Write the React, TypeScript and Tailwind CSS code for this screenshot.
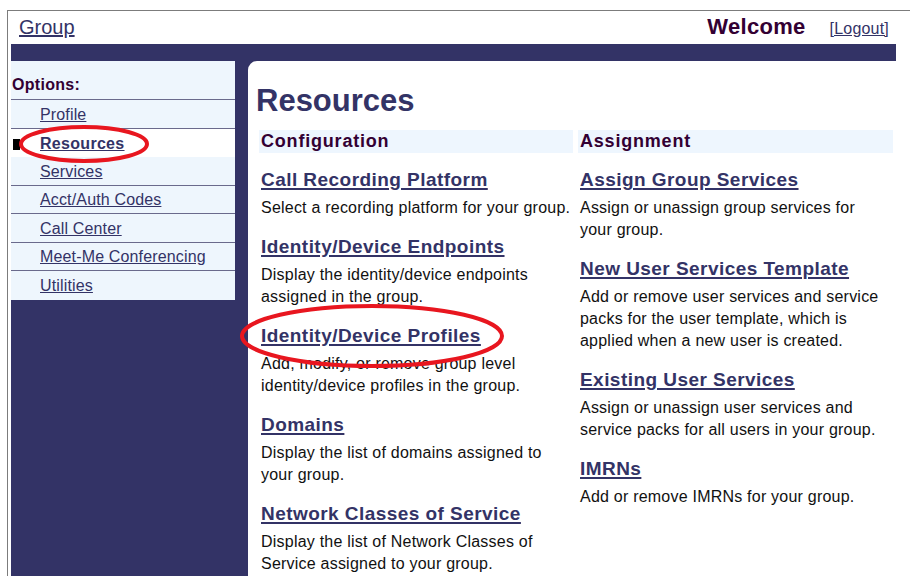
const menuItems = [
  "Profile",
  "Resources",
  "Services",
  "Acct/Auth Codes",
  "Call Center",
  "Meet-Me Conferencing",
  "Utilities",
];

const configuration = [
  {
    title: "Call Recording Platform",
    text: "Select a recording platform for your group.",
  },
  {
    title: "Identity/Device Endpoints",
    text: "Display the identity/device endpoints assigned in the group.",
  },
  {
    title: "Identity/Device Profiles",
    text: "Add, modify, or remove group level identity/device profiles in the group.",
  },
  {
    title: "Domains",
    text: "Display the list of domains assigned to your group.",
  },
  {
    title: "Network Classes of Service",
    text: "Display the list of Network Classes of Service assigned to your group.",
  },
];

const assignment = [
  {
    title: "Assign Group Services",
    text: "Assign or unassign group services for your group.",
  },
  {
    title: "New User Services Template",
    text: "Add or remove user services and service packs for the user template, which is applied when a new user is created.",
  },
  {
    title: "Existing User Services",
    text: "Assign or unassign user services and service packs for all users in your group.",
  },
  {
    title: "IMRNs",
    text: "Add or remove IMRNs for your group.",
  },
];

type Item = { title: string; text: string };

const Section = ({ heading, items, narrow }: { heading: string; items: Item[]; narrow?: boolean }) => {
  return (
    <div>
      <div className="h-[23px] bg-[#eef6fe] px-[2px] text-[18px] font-bold leading-[23px] tracking-[0.8px] text-[#330033]">
        {heading}
      </div>
      <div className={narrow ? "mt-[16px] flex flex-col gap-[17px] pl-[2px] pr-[6px]" : "mt-[16px] flex flex-col gap-[17px] pl-[2px]"}>
        {items.map((item) => (
          <div key={item.title}>
            <a
              href="#"
              className="text-[19px] font-bold leading-[22px] tracking-[0.45px] text-[#333366] underline decoration-2 underline-offset-[2px]"
            >
              {item.title}
            </a>
            <p className="mt-[4px] text-[16px] leading-[22px] tracking-[0.22px] text-[#111111]">{item.text}</p>
          </div>
        ))}
      </div>
    </div>
  );
};

const App = () => {
  return (
    <div className="relative h-[576px] w-[910px] overflow-hidden bg-white pl-[7px] pt-[10px] font-['Liberation_Sans',Arial,sans-serif]">
      <div className="flex h-full flex-col border-l border-t border-[#7c7c7c] pl-[3px]">
        {/* Top header */}
        <div className="flex h-[33px] shrink-0 items-baseline pr-[21px] pt-[4px]">
          <a href="#" className="ml-[8px] text-[20px] leading-[24px] text-[#333366] underline">
            Group
          </a>
          <span className="ml-auto text-[22px] font-bold leading-[24px] tracking-[0.3px] text-[#330033]">Welcome</span>
          <a href="#" className="ml-[24px] text-[16px] leading-[24px] tracking-[0.2px] text-[#333366] underline">
            [Logout]
          </a>
        </div>

        {/* Navy frame */}
        <div className="mr-[14px] flex min-h-0 flex-1 bg-[#333366] pt-[17px]">
          {/* Sidebar menu */}
          <div className="w-[224px] self-start bg-[#eef6fd]">
            <div className="flex h-[39px] items-end border-b border-[#6a6a8c] pb-[4px] pl-[1px] text-[16px] font-bold leading-[20px] tracking-[0.3px] text-[#330033]">
              Options:
            </div>
            {menuItems.map((label) => {
              const active = label === "Resources";
              return (
                <div
                  key={label}
                  className={
                    active
                      ? "relative flex h-[28.5px] items-center border-b border-transparent bg-white pl-[29px] pt-[3px]"
                      : "relative flex h-[28.5px] items-center border-b border-[#6a6a8c] pl-[29px] pt-[2px] last:border-b-0"
                  }
                >
                  {active && <span className="absolute left-[2px] top-[10px] h-[11px] w-[7px] bg-black" />}
                  <a
                    href="#"
                    className={
                      active
                        ? "text-[16px] font-bold leading-[20px] tracking-[0.3px] text-[#333366] underline"
                        : "text-[16px] leading-[20px] tracking-[0.15px] text-[#333366] underline"
                    }
                  >
                    {label}
                  </a>
                </div>
              );
            })}
          </div>

          {/* Content panel */}
          <div className="ml-[13px] flex-1 rounded-tl-[9px] bg-white pl-[11px] pr-[3px] pt-[22px]">
            <h1 className="-ml-[3px] text-[31px] font-bold leading-[36px] text-[#333366]">Resources</h1>
            <div className="mt-[11px] grid grid-cols-[314px_315px] gap-x-[5px]">
              <Section heading="Configuration" items={configuration} />
              <Section heading="Assignment" items={assignment} narrow />
            </div>
          </div>
        </div>
      </div>

      {/* Red marker rings */}
      <svg className="pointer-events-none absolute left-0 top-0" width="910" height="576" viewBox="0 0 910 576">
        <ellipse cx="84" cy="144" rx="63" ry="17" fill="none" stroke="#e8161f" strokeWidth="4" />
        <ellipse cx="372" cy="336" rx="130" ry="30" fill="none" stroke="#e8161f" strokeWidth="4" />
      </svg>
    </div>
  );
};

export default App;
